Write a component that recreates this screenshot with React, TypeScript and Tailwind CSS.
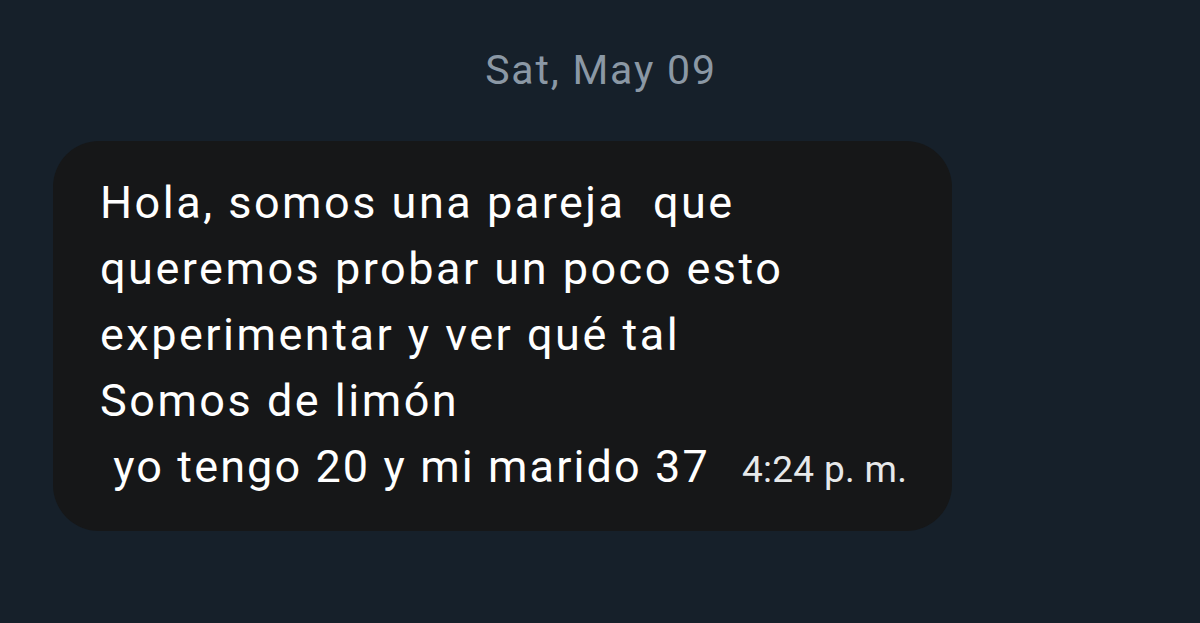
export default function App() {
  return (
    <div className="w-[1200px] h-[623px] bg-[#16202a] overflow-hidden" style={{ fontFamily: "Roboto, 'Liberation Sans', sans-serif" }}>
      <div className="pt-[44px] flex justify-center">
        <span className="text-[41px] leading-[52px] tracking-[1.8px] text-[#8b98a5] pl-[2px]">Sat, May 09</span>
      </div>
      <div className="ml-[53px] mt-[45px] w-[899px] h-[390px] rounded-[46px] bg-[#161718] pl-[47px] pt-[29px]">
        <div className="text-[45px] leading-[66px] tracking-[2.5px] text-white whitespace-pre">
          <div>Hola, somos una pareja  que</div>
          <div>queremos probar un poco esto</div>
          <div>experimentar y ver qué tal</div>
          <div>Somos de limón</div>
          <div className="flex items-baseline">
            <span className="tracking-[2.1px]"> yo tengo 20 y mi marido 37</span>
            <span className="ml-[32px] text-[37px] tracking-[0.3px] text-[#e7e9ea]">4:24 p. m.</span>
          </div>
        </div>
      </div>
    </div>
  );
}
